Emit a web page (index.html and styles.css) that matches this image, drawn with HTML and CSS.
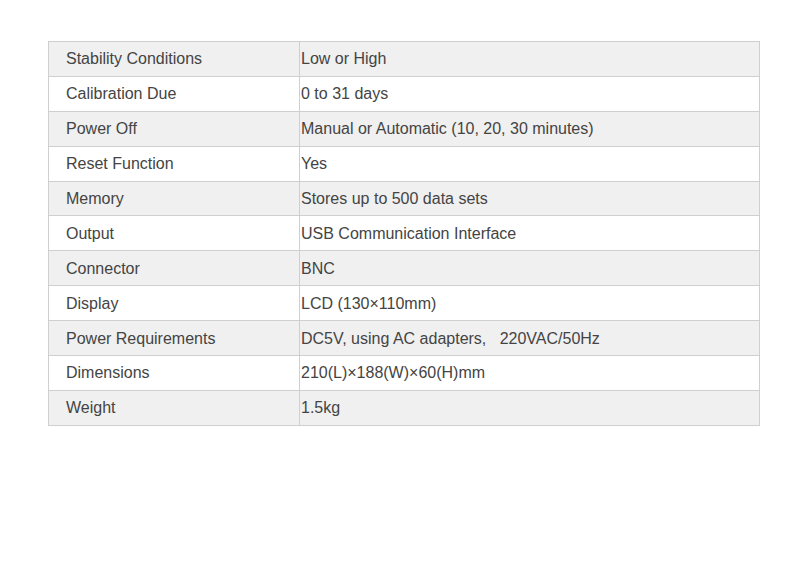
FILE: index.html
```html
<!DOCTYPE html>
<html>
<head>
<meta charset="utf-8">
<link rel="stylesheet" href="styles.css">
</head>
<body>
<table class="spec">
<tr><td class="k">Stability Conditions</td><td class="v">Low or High</td></tr>
<tr><td class="k">Calibration Due</td><td class="v">0 to 31 days</td></tr>
<tr><td class="k">Power Off</td><td class="v">Manual or Automatic (10, 20, 30 minutes)</td></tr>
<tr><td class="k">Reset Function</td><td class="v">Yes</td></tr>
<tr><td class="k">Memory</td><td class="v">Stores up to 500 data sets</td></tr>
<tr><td class="k">Output</td><td class="v">USB Communication Interface</td></tr>
<tr><td class="k">Connector</td><td class="v">BNC</td></tr>
<tr><td class="k">Display</td><td class="v">LCD (130×110mm)</td></tr>
<tr><td class="k">Power Requirements</td><td class="v">DC5V, using AC adapters,&nbsp;&nbsp;&nbsp;220VAC/50Hz</td></tr>
<tr><td class="k">Dimensions</td><td class="v">210(L)×188(W)×60(H)mm</td></tr>
<tr><td class="k">Weight</td><td class="v">1.5kg</td></tr>
</table>
</body>
</html>
```
FILE: styles.css
```css
html, body { margin: 0; padding: 0; background: #fff; }
body { padding: 41px 0 0 48px; font-family: "Liberation Sans", Arial, sans-serif; }
.spec {
  border-collapse: collapse;
  width: 712px;
  font-size: 16px;
  color: #444;
}
.spec td {
  border: 1px solid #cfcfcf;
  height: 32.9px;
  padding: 1px 0 0 0;
  vertical-align: middle;
}
.spec tr:nth-child(odd) td { background: #f0f0f0; }
.spec .k { width: 233px; padding-left: 17px; }
.spec .v { padding-left: 1px; }
```
